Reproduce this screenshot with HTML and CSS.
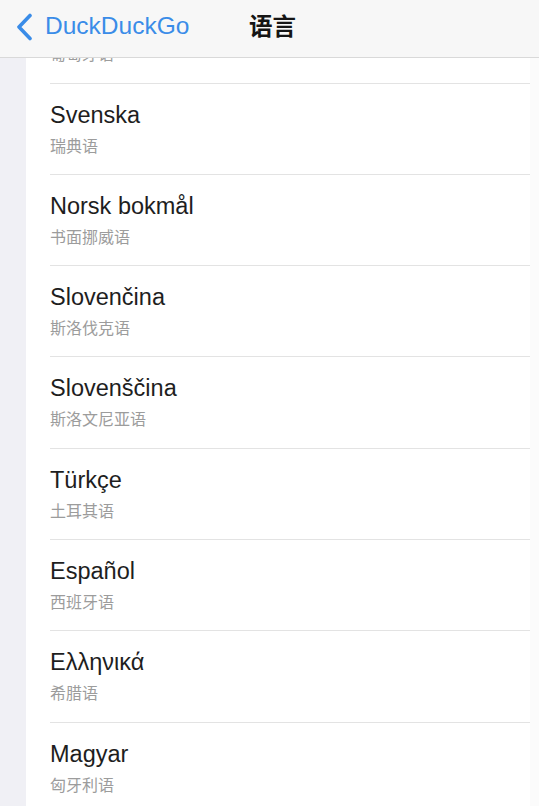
FILE: index.html
```html
<!DOCTYPE html>
<html>
<head>
    <meta http-equiv="Content-Type" content="text/html; charset=UTF-8">
    <title>语言</title>
    <link rel="stylesheet" href="styles.css">
</head>
<body>
<div class="screen">
    <div class="navbar">
        <a class="back" href="#">
            <svg class="chevron" width="18" height="28" viewBox="0 0 18 28"><path d="M15 2.5 L4 14 L15 25.5" fill="none" stroke="#3a8ce8" stroke-width="3.6" stroke-linecap="round" stroke-linejoin="round"/></svg>
            <span>DuckDuckGo</span>
        </a>
        <div class="nav-title">语言</div>
        <div></div>
    </div>
    <div class="page">
        <div class="side"></div>
        <ul class="lang-list">
            <li class="cut"><span class="sub">葡萄牙语</span></li>
            <li><span class="name">Svenska</span><span class="sub">瑞典语</span></li>
            <li><span class="name">Norsk bokmål</span><span class="sub">书面挪威语</span></li>
            <li><span class="name">Slovenčina</span><span class="sub">斯洛伐克语</span></li>
            <li><span class="name">Slovenščina</span><span class="sub">斯洛文尼亚语</span></li>
            <li><span class="name">Türkçe</span><span class="sub">土耳其语</span></li>
            <li><span class="name">Español</span><span class="sub">西班牙语</span></li>
            <li><span class="name">Ελληνικά</span><span class="sub">希腊语</span></li>
            <li><span class="name">Magyar</span><span class="sub">匈牙利语</span></li>
        </ul>
        <div class="edge"></div>
    </div>
</div>
</body>
</html>
```

FILE: styles.css
```css
body{margin:0; font-family:"Liberation Sans","Noto Sans CJK SC",sans-serif; background:#fff;}
.screen{width:539px; height:806px; overflow:hidden; display:flex; flex-direction:column;}

.navbar{
    flex:none; height:58px; background:#f7f7f7; border-bottom:1px solid #d9d9d9;
    display:grid; grid-template-columns:1fr auto 1fr; align-items:center; padding-bottom:3px; box-sizing:border-box;}
.back{display:flex; align-items:center; gap:12px; padding-left:15px; text-decoration:none; color:#3a8ce8; font-size:24.5px; white-space:nowrap;}
.back span{margin-top:-2px;}
.chevron{display:block;}
.nav-title{padding:0 0 0 6px; margin-top:-5px; font-size:23.5px; font-weight:bold; color:#151515; font-family:"Noto Sans CJK SC",sans-serif;}

.page{flex:1; display:flex; overflow:hidden;}
.side{width:26px; flex:none; background:#f0f0f5;}
.edge{width:9px; flex:none; background:#fbfbfb;}
.lang-list{flex:1; margin:0; padding:0 0 0 24px; list-style:none; background:#fff;}
.lang-list li{
    display:flex; flex-direction:column;
    padding:17px 0 18.3px 0; border-bottom:1px solid #e3e3e3;}
.lang-list li.cut{padding-top:0; margin-top:-14.8px;}
.lang-list li.cut .sub{margin-top:0;}
.name{font-size:23.5px; line-height:28px; color:#1e1e1e;}
.sub{margin-top:6px; font-size:16px; line-height:21px; color:#9c9c9c; font-family:"Noto Sans CJK SC",sans-serif;}
```
